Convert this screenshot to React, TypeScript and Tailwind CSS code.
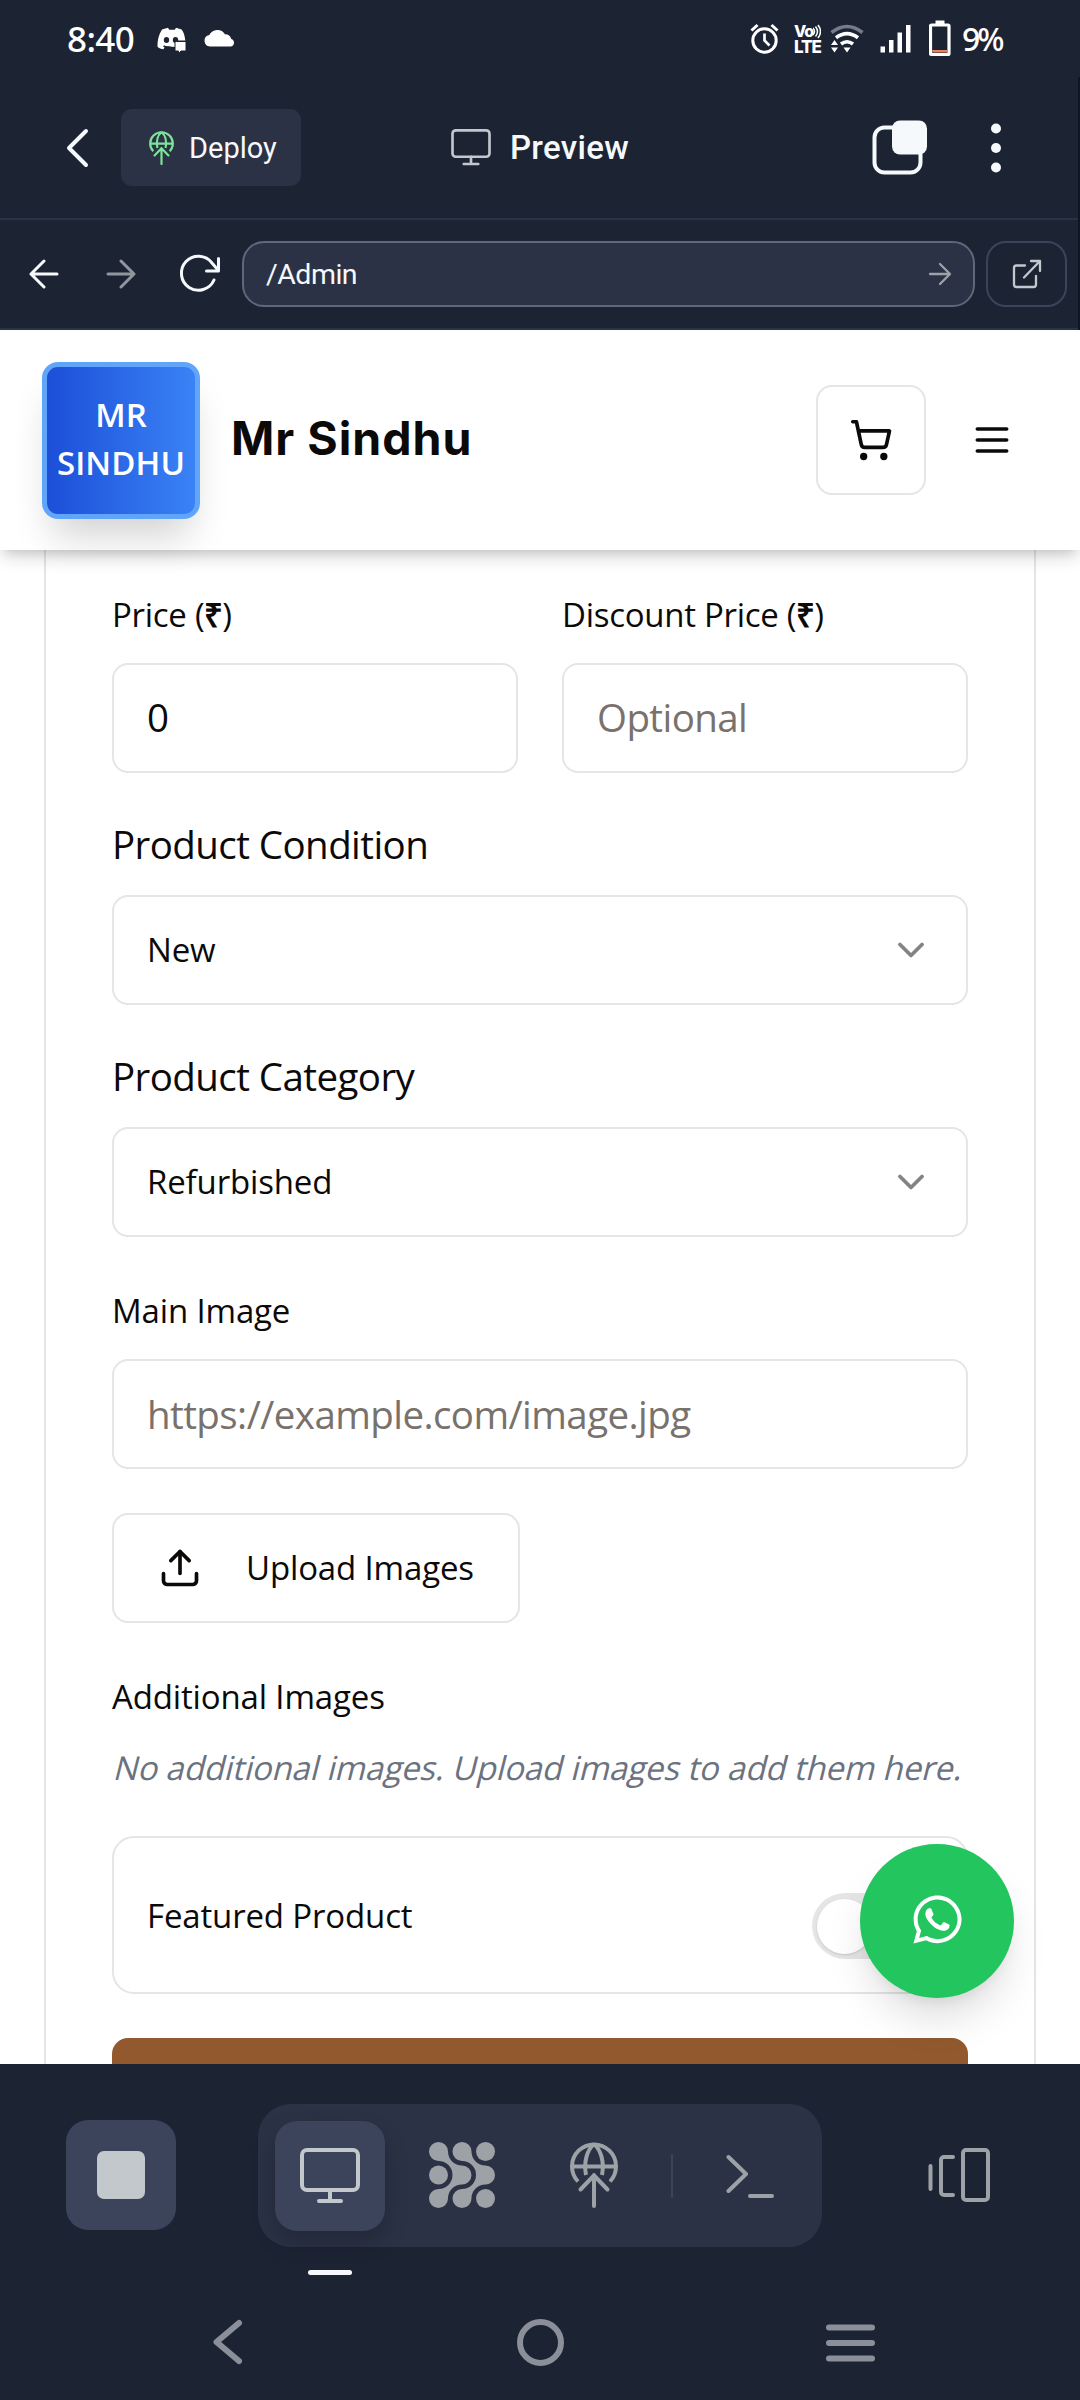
import type { ReactNode } from "react";
import { ChevronDown, Upload, ShoppingCart } from "lucide-react";
import { FaWhatsapp } from "react-icons/fa";

function StatusBar() {
  return (
    <div className="flex h-[77px] items-start pl-[67px] pr-[78px] text-white">
      <span className="mt-[15px] w-[90px] text-[35px] leading-[48px] font-['Noto_Sans'] font-medium tracking-[-0.6px]">8:40</span>
      <svg className="mt-[27px]" width="30" height="28" viewBox="0 0 30 28" fill="none">
        <path d="M5 2.5 11 .8l1.2 2h5.6l1.2-2 5.6 1.700c2.200 3 3.200 6.300 3.700 11H18.500v6.500l-10.500-.8-1.500 3C4.200 22 2 21.200.5 19.800.2 13.500 1.700 7.700 5 2.500Z" fill="#fff" />
        <ellipse cx="9.500" cy="13" rx="2.700" ry="3" fill="#1c2333" />
        <ellipse cx="18.500" cy="13" rx="2.700" ry="3" fill="#1c2333" />
        <path d="M6.500 19q3 1.500 7 1.200" stroke="#1c2333" strokeWidth="1.500" />
        <path d="M19.500 14.500h9.500v9.500h-5l-2.500 2.700V24h-3.500v-9.500Z" fill="#fff" stroke="#1c2333" strokeWidth="1" />
      </svg>
      <svg className="ml-[17px] mt-[28px]" width="32" height="19" viewBox="0 0 32 19" fill="#fff">
        <path d="M6 18.500A5.800 5.800 0 0 1 5.300 7 9 9 0 0 1 21 6.200 6.500 6.500 0 0 1 27.300 11 3.900 3.900 0 0 1 27 18.500Z" />
      </svg>
      <svg className="ml-auto mt-[23px]" width="29" height="31" viewBox="0 0 29 31" fill="none" stroke="#fff">
        <circle cx="14.500" cy="17.500" r="11.700" strokeWidth="3" />
        <path d="M1.500 7.500 7.500 2M27.500 7.500 21.500 2" strokeWidth="3" />
        <path d="M14.500 10.500v7l5 5" strokeWidth="2.700" />
      </svg>
      <div className="ml-[15px] mt-[24px] w-[28px] font-['Inter'] font-extrabold">
        <div className="flex h-[15px] items-center">
          <span className="text-[16px] leading-[15px] tracking-[-1px]">Vo</span>
          <svg className="shrink-0" width="8" height="15" viewBox="0 0 8 15" fill="none" stroke="#fff" strokeWidth="1.500">
            <path d="M0 4q3 3.500 0 7M2.500 2.500q4 5 0 10M5 1q5 6.500 0 13" />
          </svg>
        </div>
        <div className="mt-px text-[17px] leading-[14px] tracking-[-1px]">LTE</div>
      </div>
      <svg className="ml-[8px] mt-[24px]" width="34" height="30" viewBox="0 0 34 30" fill="none" stroke="#fff" strokeWidth="3.600">
        <path d="M1.500 8.500Q17 -3.500 32.500 8.500" stroke="#777b87" />
        <path d="M6 13.800Q17 5.500 28 13.800" />
        <path d="M11 20Q17 15.500 23 20" />
        <path d="M13.500 23.500h7L17 28.500ZM1 21 4.500 16 8 21ZM1 23.500h7L4.500 28.500Z" fill="#fff" stroke="none" />
      </svg>
      <svg className="ml-[16px] mt-[24px]" width="32" height="30" viewBox="0 0 32 30" fill="#fff">
        <path d="M.5 22.500h4.500V28.500H.5ZM9 16h4.500v12.500H9ZM17.500 8.500H22v20h-4.500ZM26 1h4.500v27.500H26Z" />
      </svg>
      <svg className="ml-[17px] mt-[20px]" width="22" height="37" viewBox="0 0 22 37" fill="none">
        <path d="M6.500.5h9v4h-9Z" fill="#fff" />
        <rect x="1.500" y="5" width="18.500" height="29.500" rx="1" stroke="#fff" strokeWidth="3.200" />
        <path d="M3.200 30h15v2.500h-15Z" fill="#e8835f" />
      </svg>
      <span className="ml-[11px] mt-[16px] w-[40px] text-[32px] leading-[46px] font-['Noto_Sans'] font-medium tracking-[-3px]">9%</span>
    </div>
  );
}

function MonitorIcon({ className, strokeWidth }: { className: string; strokeWidth: number }) {
  return (
    <svg className={className} viewBox="0 0 60 56" fill="none" stroke="#c2c8cc" strokeWidth={strokeWidth} strokeLinecap="round" strokeLinejoin="round">
      <rect x="2" y="2" width="56" height="40" rx="5" />
      <path d="M30 42v11M19 53h22" />
    </svg>
  );
}

function DeployIcon({ className, strokeWidth }: { className: string; strokeWidth: number }) {
  return (
    <svg className={className} viewBox="0 0 48 66" fill="none" stroke="currentColor" strokeWidth={strokeWidth} strokeLinejoin="round">
      <path d="M8 39.500A22 22 0 1 1 40 39.500M2 24.500h44" />
      <path d="M24 2C17 8 13.500 20 16 33M24 2c7 6 10.500 18 8 31" />
      <path d="M24 64V33M10.500 47.500 24 33.500l13.500 14" strokeLinecap="round" />
    </svg>
  );
}

function AppHeader() {
  return (
    <div className="flex h-[143px] items-start border-b-2 border-[#2b3245] pt-[32px] text-[#f5f9fc] font-['Roboto']">
      <svg className="ml-[66px] mt-[19px]" width="24" height="40" viewBox="0 0 24 40" fill="none" stroke="currentColor" strokeWidth="4" strokeLinecap="round" strokeLinejoin="round">
        <path d="M20 3 3 20l17 17" />
      </svg>
      <div className="ml-[31px] flex h-[77px] w-[180px] items-center rounded-[11px] bg-[#2b3245]">
        <DeployIcon className="ml-[28px] h-[34px] w-[25px] text-[#7ee29a]" strokeWidth={4.2} />
        <span className="ml-[15px] text-[29px] leading-[44px]">Deploy</span>
      </div>
      <MonitorIcon className="ml-[150px] mt-[20px] h-[37px] w-[40px]" strokeWidth={4} />
      <span className="ml-[19px] mt-[17px] text-[33px] leading-[44px] font-medium tracking-[0.300px]">Preview</span>
      <div className="ml-auto mr-[77px] flex">
        <svg className="mt-[10px]" width="56" height="56" viewBox="0 0 56 56" fill="none">
          <rect x="2.500" y="8.500" width="46" height="45" rx="10" stroke="#f5f9fc" strokeWidth="4" />
          <rect x="20" y="1.500" width="35" height="34" rx="8" fill="#f5f9fc" />
        </svg>
        <svg className="ml-[63px] mt-[14px]" width="10" height="50" viewBox="0 0 10 50" fill="#f5f9fc">
          <circle cx="5" cy="5.500" r="5" />
          <circle cx="5" cy="25" r="5" />
          <circle cx="5" cy="44.500" r="5" />
        </svg>
      </div>
    </div>
  );
}

function UrlBar() {
  return (
    <div className="flex h-[110px] items-center border-b-2 border-[#2b3245] font-['Roboto']">
      <svg className="ml-[29px]" width="30" height="30" viewBox="0 0 30 30" fill="none" stroke="#f5f9fc" strokeWidth="3" strokeLinecap="round" strokeLinejoin="round">
        <path d="M28 15H2.500M15 2 2 15l13 13" />
      </svg>
      <svg className="ml-[47px]" width="30" height="30" viewBox="0 0 30 30" fill="none" stroke="#90959e" strokeWidth="3" strokeLinecap="round" strokeLinejoin="round">
        <path d="M2 15h25.500M15 2l13 13-13 13" />
      </svg>
      <svg className="ml-[43px]" width="42" height="40" viewBox="0 0 42 40" fill="none" stroke="#f5f9fc" strokeWidth="3" strokeLinecap="round" strokeLinejoin="round">
        <path d="M39.500 4.500v12.500H27.500M39 16 33 9A17 17 0 1 0 35 26" />
      </svg>
      <div className="ml-[21px] flex h-[66px] w-[733px] items-center rounded-[22px] border-2 border-[#5f677a] bg-[#2b3245] pl-[22px] pr-[21px]">
        <span className="mt-px text-[28.5px] leading-[44px] tracking-[-0.5px] text-[#f5f9fc]">/Admin</span>
        <svg className="ml-auto" width="24" height="24" viewBox="0 0 24 24" fill="none" stroke="#9da2a6" strokeWidth="2.300" strokeLinecap="round" strokeLinejoin="round">
          <path d="M2 12h19M12 2l10 10-10 10" />
        </svg>
      </div>
      <div className="ml-[11px] flex h-[66px] w-[81px] items-center justify-center rounded-[20px] border-2 border-[#3c445c]">
        <svg width="30" height="30" viewBox="0 0 30 30" fill="none" stroke="#c2c8cc" strokeWidth="2.300" strokeLinecap="round" strokeLinejoin="round">
          <path d="M13 6.500H4.500a2.500 2.500 0 0 0-2.500 2.500v16.500a2.500 2.500 0 0 0 2.500 2.500h17a2.500 2.500 0 0 0 2.500-2.500V17M12 18.500 27.500 2.500M19 2h9v10" />
        </svg>
      </div>
    </div>
  );
}

function SiteHeader() {
  return (
    <header className="relative z-10 flex h-[220px] shrink-0 items-center bg-white shadow-[0_11px_16px_-3px_rgba(0,0,0,0.14),0_5px_11px_-5px_rgba(0,0,0,0.16)]">
      <div className="ml-[42px] flex h-[157px] w-[158px] flex-col items-center justify-center rounded-[16px] border-[5px] border-[#60a5fa] bg-linear-to-r from-[#1d4ed8] to-[#3b82f6] text-center font-['Open_Sans'] text-[33px] leading-[48px] font-semibold text-white shadow-[0_26px_38px_-10px_rgba(0,0,0,0.18)]">
        <span className="-mt-[3px]">MR</span>
        <span className="tracking-[0.1px]">SINDHU</span>
      </div>
      <h1 className="-mt-[5px] ml-[31px] text-[46.5px] leading-[60px] font-bold tracking-[1px] text-[#0c0a09] font-['Inter']">Mr Sindhu</h1>
      <div className="ml-auto flex h-[110px] w-[110px] items-center justify-center rounded-[16px] border-2 border-[#e5e5e5] text-[#0c0a09]">
        <ShoppingCart size={44} strokeWidth={2} />
      </div>
      <svg className="ml-[44px] mr-[66px]" width="44" height="44" viewBox="0 0 24 24" fill="none" stroke="#0c0a09" strokeWidth="2" strokeLinecap="round">
        <path d="M4 6h16M4 12h16M4 18h16" />
      </svg>
    </header>
  );
}

function Label({ children, className = "" }: { children: ReactNode; className?: string }) {
  return <div className={"flex h-11 shrink-0 items-center pt-[2px] whitespace-pre " + className}>{children}</div>;
}

function Field({ children, className = "" }: { children: ReactNode; className?: string }) {
  return (
    <div className={"flex h-[110px] shrink-0 items-center rounded-[16px] border-2 border-[#e5e5e5] bg-white px-[33px] " + className}>{children}</div>
  );
}

function Select({ value }: { value: string }) {
  return (
    <Field className="mt-[29px] justify-between text-[33px]">
      <span>{value}</span>
      <ChevronDown size={44} strokeWidth={2} className="opacity-50" />
    </Field>
  );
}

function ProductForm() {
  return (
    <div className="mx-[44px] flex h-[1514px] flex-col overflow-hidden border-x-2 border-[#e5e5e5] px-[66px] pt-[42px] text-[33px] tracking-[-0.15px] text-[#0c0a09]">
      <div className="grid shrink-0 grid-cols-2 gap-[44px]">
        <div>
          <Label className="tracking-[-0.280px]">
            Price (<span className="font-semibold tracking-[-1px]">₹</span>)
          </Label>
          <Field className="mt-[27px] text-[38.5px] tracking-[-0.57px]">0</Field>
        </div>
        <div>
          <Label className="tracking-[-0.280px]">
            Discount Price (<span className="font-semibold tracking-[-1px]">₹</span>)
          </Label>
          <Field className="mt-[27px] text-[38.5px] tracking-[-0.57px] text-[#78716c]">Optional</Field>
        </div>
      </div>
      <Label className="mt-[49px] text-[38.5px] tracking-[-0.57px]">Product Condition</Label>
      <Select value="New" />
      <Label className="mt-[49px] text-[38.5px] tracking-[-0.57px]">Product Category</Label>
      <Select value="Refurbished" />
      <Label className="mt-[51px]">Main Image</Label>
      <Field className="mt-[27px] pt-px text-[38.5px] tracking-[-0.57px] text-[#78716c]">https://example.com/image.jpg</Field>
      <div className="mt-[44px] flex h-[110px] w-[408px] shrink-0 items-center rounded-[16px] border-2 border-[#e5e5e5] pl-[44px]">
        <Upload size={44} strokeWidth={2} />
        <span className="ml-[44px] whitespace-nowrap">Upload Images</span>
      </div>
      <Label className="mt-[51px]">Additional Images</Label>
      <p className="mt-[28px] h-11 shrink-0 origin-[0_35px] -skew-x-[14deg] leading-[44px] whitespace-nowrap text-[#6b7280]">
        No additional images. Upload images to add them here.
      </p>
      <div className="mt-[46px] flex h-[158px] shrink-0 items-center justify-between rounded-[22px] border-2 border-[#e5e5e5] px-[33px]">
        <span className="mt-[2px]">Featured Product</span>
        <div className="mt-[22px] flex h-[66px] w-[121px] items-center rounded-full bg-[#e5e5e5] pl-[5px]">
          <div className="h-[55px] w-[55px] rounded-full bg-white shadow-sm" />
        </div>
      </div>
      <div className="mt-[44px] h-[110px] shrink-0 rounded-[16px] bg-[#92592e]" />
    </div>
  );
}

function GridIcon() {
  const ribbon =
    "M19 9.500A14 14 0 0 0 33 23.500A9.500 9.500 0 0 1 33 42.500A14 14 0 0 0 19 56.500A9.500 9.500 0 1 1 9.500 47A14 14 0 0 0 9.500 19A9.500 9.500 0 1 1 19 9.500Z";
  return (
    <svg width="66" height="66" viewBox="0 0 66 66" fill="#9da2a6">
      <path d={ribbon} />
      <path d={ribbon} transform="translate(23.500 0)" />
      <circle cx="56.500" cy="9.500" r="9.500" />
      <circle cx="9.500" cy="33" r="9.500" />
      <circle cx="56.500" cy="56.500" r="9.500" />
    </svg>
  );
}

function BottomBar() {
  return (
    <div className="flex h-[336px] flex-col">
      <div className="flex h-[223px] items-start pt-[40px]">
        <div className="ml-[66px] mt-[16px] flex h-[110px] w-[110px] items-center justify-center rounded-[22px] bg-[#3c445c]">
          <div className="h-[48px] w-[48px] rounded-[7px] bg-[#c2c8cc]" />
        </div>
        <div className="ml-[82px] flex h-[143px] w-[564px] items-center rounded-[33px] bg-[#2b3245] text-[#9da2a6]">
          <div className="relative ml-[17px] flex h-[110px] w-[110px] items-center justify-center rounded-[22px] bg-[#3c445c] shadow-[0_11px_22px_rgba(2,8,20,0.22)]">
            <MonitorIcon className="h-[56px] w-[60px]" strokeWidth={4} />
            <div className="absolute top-[149px] left-[33px] h-[5px] w-[44px] rounded-full bg-[#f5f9fc]" />
          </div>
          <div className="-mt-px ml-[44px]">
            <GridIcon />
          </div>
          <DeployIcon className="-mt-[2px] ml-[75px] h-[66px] w-[48px]" strokeWidth={4} />
          <div className="ml-[53px] h-[44px] w-[2px] bg-[#3c445c]" />
          <svg className="ml-[52px]" width="50" height="48" viewBox="0 0 50 48" fill="none" stroke="currentColor" strokeWidth="4" strokeLinecap="round" strokeLinejoin="round">
            <path d="M3.500 5 21 22 3.500 39M25 44h22" />
          </svg>
        </div>
        <svg className="ml-[106px] mt-[42px]" width="64" height="57" viewBox="0 0 64 57" fill="none" stroke="#9da2a6" strokeWidth="4" strokeLinecap="round" strokeLinejoin="round">
          <path d="M2.500 20v23M25 11H16a3 3 0 0 0-3 3v32a3 3 0 0 0 3 3h9" />
          <rect x="35" y="4" width="25" height="50" rx="3" />
        </svg>
      </div>
      <div className="flex h-[113px] items-start pt-[30px] text-[#8b8f99]">
        <svg className="ml-[212px] mt-[2px]" width="32" height="46" viewBox="0 0 32 46" fill="none" stroke="currentColor" strokeWidth="6" strokeLinecap="round" strokeLinejoin="round">
          <path d="M27 4 4.500 23 27 42" />
        </svg>
        <svg className="ml-[272px] mt-px" width="49" height="49" viewBox="0 0 49 49" fill="none" stroke="currentColor" strokeWidth="6">
          <circle cx="24.500" cy="24.500" r="20.500" />
        </svg>
        <svg className="ml-[260px] mt-[6px]" width="50" height="40" viewBox="0 0 50 40" fill="none" stroke="currentColor" strokeWidth="6" strokeLinecap="round">
          <path d="M4 4.500h43M4 20h43M4 35.500h43" />
        </svg>
      </div>
    </div>
  );
}

export default function App() {
  return (
    <div className="relative flex h-[2400px] w-[1080px] flex-col overflow-hidden bg-[#1c2333]">
      <StatusBar />
      <div className="w-full border-r-2 border-[#0e1525]">
        <AppHeader />
        <UrlBar />
      </div>
      <main className="relative h-[1734px] shrink-0 overflow-hidden bg-white font-['Open_Sans']">
        <SiteHeader />
        <ProductForm />
        <div className="absolute top-[1514px] left-[860px] flex h-[154px] w-[154px] items-center justify-center rounded-full bg-[#22c55e] text-white shadow-[0_26px_42px_-6px_rgba(0,0,0,0.13),0_10px_16px_-10px_rgba(0,0,0,0.12)]">
          <FaWhatsapp size={55} className="-mt-[3px]" />
        </div>
      </main>
      <BottomBar />
    </div>
  );
}
